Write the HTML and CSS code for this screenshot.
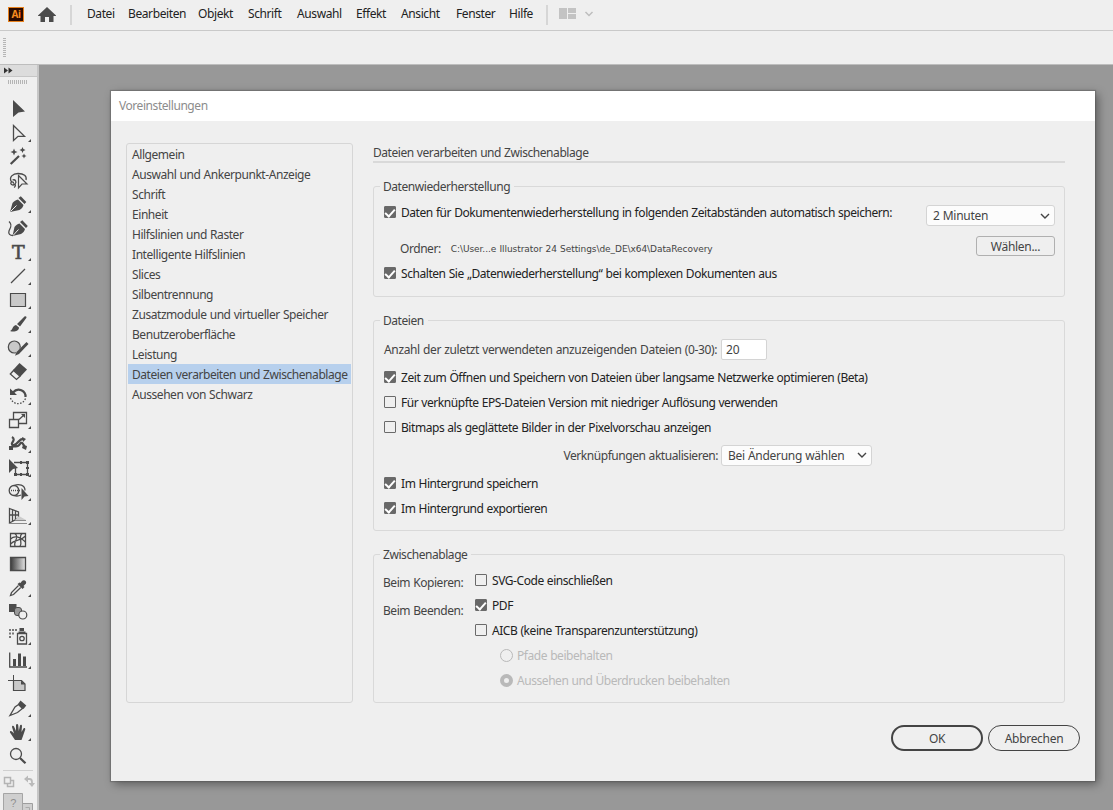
FILE: index.html
```html
<!DOCTYPE html>
<html lang="de">
<head>
  <meta charset="UTF-8">
  <title>Voreinstellungen</title>
  <meta name="viewport" content="width=device-width, initial-scale=1.0">
  <link rel="stylesheet" href="styles.css">
</head>
<body>
  <header class="menubar">
    <div class="app-logo">Ai</div>
    <svg class="home" width="20" height="18" viewBox="0 0 20 18"><path d="M10 1L1 9.5V10H3.5V16H8V11H12V16H16.500V10H19V9.500z" fill="#4b4b4b"/></svg>
    <span class="sep"></span>
    <nav class="menu">
      <span class="m1">Datei</span>
      <span class="m2">Bearbeiten</span>
      <span class="m3">Objekt</span>
      <span class="m4">Schrift</span>
      <span class="m5">Auswahl</span>
      <span class="m6">Effekt</span>
      <span class="m7">Ansicht</span>
      <span class="m8">Fenster</span>
      <span class="m9">Hilfe</span>
    </nav>
    <span class="sep"></span>
    <svg class="workspace" width="36" height="12" viewBox="0 0 36 12">
      <path d="M0 0H8V11H0zM9 0H17V5H9zM9 6H17V11H9z" fill="#c3c3c3"/>
      <path d="M26.500 4L30 7.500L33.500 4" fill="none" stroke="#bdbdbd" stroke-width="1.500"/>
    </svg>
  </header>
  <div class="control-bar"><span class="grip"></span></div>

  <div class="workarea">
    <aside class="toolbar">
      <div class="toolbar-head">
        <svg width="10" height="7" viewBox="0 0 10 7"><path d="M0 .5L4 3.500L0 6.500zM4.500 .5L8.500 3.500L4.500 6.500z" fill="#333"/></svg>
      </div>
      <div class="toolbar-grip"></div>

      <div class="tools">
        <svg class="tool" viewBox="0 0 38 24"><path class="f" d="M13 4L25 15.500L18.500 16.500L13 21z"/></svg>
        <svg class="tool" viewBox="0 0 38 24"><path class="s" d="M13.500 5.500L24.500 16.300H18L13.500 20.500z"/><path class="f" d="M31 19V22H28z"/></svg>
        <svg class="tool" viewBox="0 0 38 24"><path class="s2" d="M10.700 20L19 12"/><path class="f" d="M14 4.500L15 7L17.500 8L15 9L14 11.500L13 9L10.500 8L13 7zM22.500 3L23.400 5.100L25.500 6L23.400 6.900L22.500 9L21.600 6.900L19.500 6L21.600 5.100zM24 9.500L24.800 11.200L26.500 12L24.800 12.800L24 14.500L23.200 12.800L21.500 12L23.200 11.200z"/></svg>
        <svg class="tool" viewBox="0 0 38 24"><path class="s" d="M11.500 14C8.500 9 13 5.500 18 5.500C24 5.500 27 8 26 12M12.500 12C15.500 11 17 14 15 16C13 18 10 16.500 11 14.500C12 13 14.500 14.500 13 15.500M15 16C16 17.500 15 19 14 19.500"/><path class="o" d="M18.500 7.500L27 16H22L18.500 20z"/></svg>
        <svg class="tool" viewBox="0 0 38 24"><path class="f" d="M10 20L12.500 11C14 9 16 8 18 7.500L23.500 13C23 15 21.500 17 19.500 18zM18.500 6L20.800 4.300L26.300 10L24.500 12z"/><path class="w" d="M10.500 19.500L16.500 13.500"/><path class="f" d="M31 18V21H28z"/></svg>
        <svg class="tool" viewBox="0 0 38 24"><path class="f" d="M12.500 20L14.500 11C16 9 17.500 8 19.500 7.500L25 13C24.500 15 23 17 21 18zM20 6L22.300 4.300L27.800 10L26 12z"/><path class="w" d="M13 19.500L18.500 13.500"/><path class="s" d="M9 5.500C13 9 10 12 9 15C8 18 10 19.500 13 19.500"/></svg>
        <svg class="tool" viewBox="0 0 38 24"><text x="18" y="18.500" class="type">T</text><path class="f" d="M31 18V21H28z"/></svg>
        <svg class="tool" viewBox="0 0 38 24"><path class="s" d="M11 19L25 5"/><path class="f" d="M31 18V21H28z"/></svg>
        <svg class="tool" viewBox="0 0 38 24"><path class="g" d="M10.500 5.500H25.500V18.500H10.500z"/><path class="f" d="M31 18V21H28z"/></svg>
        <svg class="tool" viewBox="0 0 38 24"><path class="f" d="M24.500 4.500C26 3.800 27 5 26.300 6L20 14.500L17 12zM16 13L19 15.500C19 19 14 20.500 10 19C13 18 12 14 16 13z"/><path class="f" d="M31 18V21H28z"/></svg>
        <svg class="tool" viewBox="0 0 38 24"><circle class="g" cx="14.300" cy="11" r="6"/><path class="halo" d="M28 7.500L17 18"/><path class="f" d="M26.500 6L28.500 8L19 18L15 19.800L16.500 16z"/><path class="f" d="M31 18V21H28z"/></svg>
        <svg class="tool" viewBox="0 0 38 24"><path class="f" d="M19.500 3L27 9.500L20.500 16.500L13 10z"/><path class="s" d="M13.500 10.500L20 16.300L16.500 19.500L10.300 14z"/><path class="f" d="M31 18V21H28z"/></svg>
        <svg class="tool" viewBox="0 0 38 24"><path class="s2" d="M13 8.500C18 2.500 26 7 25.500 13"/><path class="f" d="M10 4.500V11H17z"/><path class="s" stroke-dasharray="1.500 1.500" d="M25.500 14.500C23 21.500 13 21.500 10.500 14"/><path class="f" d="M31 18V21H28z"/></svg>
        <svg class="tool" viewBox="0 0 38 24"><path class="s" d="M13.500 11V4.500H26.500V15.500H19M9.500 11.500H18.500V19.500H9.500z"/><path class="s" d="M19 11.500L24 7"/><path class="f" d="M21 6H25V10z"/><path class="f" d="M31 18V21H28z"/></svg>
        <svg class="tool" viewBox="0 0 38 24"><path class="s2" d="M12 5C17 8 9 12 13 13C18 14 19 5 24 7M9.500 16C14 12 17 17 20 12C22 9 23 12 25.500 16"/><path class="f" d="M9 14H13V18H9zM22 5L26 7L23 10zM23 13L27 14L26 18L22 16z"/><path class="f" d="M31 18V21H28z"/></svg>
        <svg class="tool" viewBox="0 0 38 24"><path class="s" d="M14 6.500H27.500V18.500H15.500V12"/><path class="f" d="M9 3L18 12L13 13L9 17zM26 5H29V8H26zM26 17H29V20H26zM14 17H17V20H14zM20 5H22V8H20zM20 17H22V20H20zM26 11H29V13H26z"/><path class="f" d="M31 18V21H28z"/></svg>
        <svg class="tool" viewBox="0 0 38 24"><ellipse class="s" cx="14" cy="10.500" rx="4.800" ry="5"/><path class="s" d="M14 5.500C19 3.500 25 5 25 10.500M14 15.500C17 16.500 20 15.500 21 15"/><path class="s" stroke-dasharray="1 1" d="M11 10.500H21"/><path class="f" d="M21.500 8L28.500 16L24.500 16.500L21.500 20z"/><path class="f" d="M31 18V21H28z"/></svg>
        <svg class="tool" viewBox="0 0 38 24"><path class="s" d="M9.500 4.500L18.500 8V14L9.500 19zM12.500 6V17.500M15.500 7V16M9.500 11H18.500"/><path d="M19 12L26 16H15z" fill="#ccc"/><path class="lite" d="M15 16.500H26M10 19.500H27"/><path class="f" d="M31 18V21H28z"/></svg>
        <svg class="tool" viewBox="0 0 38 24"><path class="s" d="M10.500 5.500H25.500V18.500H10.500z"/><path class="s" d="M10.500 11C15 7 20 9 25.500 14M15 5.500C20 10 13 13 15 18.500M22 5.500C18 9 23 14 20 18.500M10.500 16C15 11 20 14 25.500 8"/></svg>
        <svg class="tool" viewBox="0 0 38 24"><defs><linearGradient id="grad"><stop offset="0" stop-color="#3a3a3a"/><stop offset="1" stop-color="#e6e6e6"/></linearGradient></defs><path class="s fade" d="M10.500 5.500H25.500V18.500H10.500z"/></svg>
        <svg class="tool" viewBox="0 0 38 24"><path class="f" d="M22 5C24 3 27 5 26 7.500L23.500 10L24.500 11L22.500 13L17.500 8L19.500 6.500L20.500 7z"/><path class="s" d="M18.500 9.500L11.500 16.500L10.500 19.500L13.500 18.500L20.700 11.500"/><path class="f" d="M31 18V21H28z"/></svg>
        <svg class="tool" viewBox="0 0 38 24"><path class="f" d="M9 4H16.500V12H9z"/><rect x="14.500" y="7.500" width="7" height="8" rx="2.500" fill="#999" stroke="#4b4b4b"/><circle class="o" cx="22.800" cy="15" r="4"/></svg>
        <svg class="tool" viewBox="0 0 38 24"><path class="s" d="M17.500 9.500H26.500V20H17.500z"/><path class="f" d="M19.500 4H24V7H19.500zM18.500 7.500H25.500V9H18.500z"/><circle class="s" cx="22" cy="14.500" r="2.200"/><path d="M9 5H11V7H9zM12 5H14V7H12zM15 5H17V7H15zM9 8.500H11V10.500H9zM12 8.500H14V10.500H12zM9 12H11V14H9z" fill="#777"/><path class="f" d="M31 18V21H28z"/></svg>
        <svg class="tool" viewBox="0 0 38 24"><path class="s" d="M9.700 4.500V19H27"/><path class="f" d="M13 11H16V18H13zM18 5.500H21V18H18zM23 8.500H26V18H23z"/><path class="f" d="M31 18V21H28z"/></svg>
        <svg class="tool" viewBox="0 0 38 24"><path class="thin" d="M13.500 3V8M8 8.500H14"/><path class="g" d="M13.500 8.500H21.500L25 12V18.500H13.500z"/><path class="f" d="M21 8.500L25 12.500H21z"/></svg>
        <svg class="tool" viewBox="0 0 38 24"><path class="s" d="M18.500 8.500L22.500 12.500L17.500 16.500L10 19.500L15 11z"/><path class="f" d="M20.500 4.500L26.300 9.500L23.500 13L18 8z"/><path class="f" d="M31 18V21H28z"/></svg>
        <svg class="tool" viewBox="0 0 38 24"><path class="f" d="M15 20L10 12.500C9.500 11 11 10.500 12 11.500L14 13.500L12 7C12 5.500 13.500 5.300 14 6.500L16 11L16 5C16.200 3.500 18 3.500 18.200 5L18.800 11L20 5.500C20.500 4.300 22 4.700 22 6L21.500 12L23.500 8.500C24.300 7.500 25.600 8.200 25.200 9.500L23 16L21.500 20z"/><path class="f" d="M31 18V21H28z"/></svg>
        <svg class="tool" viewBox="0 0 38 24"><circle class="s" cx="16" cy="10" r="5.500"/><path class="s2" d="M20 14L25.500 19.300"/></svg>
      </div>

      <div class="swatches">
        <svg width="38" height="40" viewBox="0 0 38 40">
          <path d="M3 .5H33" stroke="#d0d0d0"/>
          <path d="M4.500 7.500H10.500V13.500H4.500zM10.500 10.500H13.500V16.500H7.500V13.500" fill="none" stroke="#b4b4b4" stroke-width="1.500"/>
          <path d="M27 9H29.500Q32 9 32 12V14" fill="none" stroke="#bababa" stroke-width="1.800"/><path d="M24 9L28 5.500V12.500zM28.500 13H35L32 17z" fill="#bababa"/>
          <path d="M20.500 33.500H32.500V45H20.500z" fill="#cfcfcf" stroke="#9e9e9e"/><path d="M25.500 37.500H29.500V41" fill="none" stroke="#aaa"/>
          <path d="M3.500 23.500H22.500V45H3.500z" fill="#cfcfcf" stroke="#a5a5a5"/>
          <text x="13" y="37" class="question">?</text>
        </svg>
      </div>
    </aside>

    <main class="canvas">
      <section class="dialog">
        <div class="titlebar">Voreinstellungen</div>
        <div class="dialog-body">
          <ul class="categories">
            <li>Allgemein</li>
            <li>Auswahl und Ankerpunkt-Anzeige</li>
            <li>Schrift</li>
            <li>Einheit</li>
            <li>Hilfslinien und Raster</li>
            <li>Intelligente Hilfslinien</li>
            <li>Slices</li>
            <li>Silbentrennung</li>
            <li>Zusatzmodule und virtueller Speicher</li>
            <li>Benutzeroberfläche</li>
            <li>Leistung</li>
            <li class="selected">Dateien verarbeiten und Zwischenablage</li>
            <li>Aussehen von Schwarz</li>
          </ul>

          <div class="settings">
            <h1>Dateien verarbeiten und Zwischenablage</h1>

            <fieldset class="recovery">
              <legend>Datenwiederherstellung</legend>
              <div class="recovery-left">
                <label class="check"><i class="box on"></i>Daten für Dokumentenwiederherstellung in folgenden Zeitabständen automatisch speichern:</label>
                <div class="folder"><span>Ordner:</span><span class="path">C:\User...e Illustrator 24 Settings\de_DE\x64\DataRecovery</span></div>
                <label class="check"><i class="box on"></i>Schalten Sie „Datenwiederherstellung“ bei komplexen Dokumenten aus</label>
              </div>
              <div class="recovery-right">
                <div class="select interval">2 Minuten<svg width="10" height="6" viewBox="0 0 10 6"><path d="M1 1L5 5L9 1"/></svg></div>
                <button class="choose">Wählen...</button>
              </div>
            </fieldset>

            <fieldset class="files">
              <legend>Dateien</legend>
              <div class="field recent"><span>Anzahl der zuletzt verwendeten anzuzeigenden Dateien (0-30):</span><div class="number">20</div></div>
              <label class="check"><i class="box on"></i>Zeit zum Öffnen und Speichern von Dateien über langsame Netzwerke optimieren (Beta)</label>
              <label class="check"><i class="box"></i>Für verknüpfte EPS-Dateien Version mit niedriger Auflösung verwenden</label>
              <label class="check"><i class="box"></i>Bitmaps als geglättete Bilder in der Pixelvorschau anzeigen</label>
              <div class="field links"><span>Verknüpfungen aktualisieren:</span><div class="select update">Bei Änderung wählen<svg width="10" height="6" viewBox="0 0 10 6"><path d="M1 1L5 5L9 1"/></svg></div></div>
              <label class="check"><i class="box on"></i>Im Hintergrund speichern</label>
              <label class="check"><i class="box on"></i>Im Hintergrund exportieren</label>
            </fieldset>

            <fieldset class="clipboard">
              <legend>Zwischenablage</legend>
              <div class="clip-labels"><span>Beim Kopieren:</span><span>Beim Beenden:</span></div>
              <div class="clip-options">
                <label class="check"><i class="box"></i>SVG-Code einschließen</label>
                <label class="check"><i class="box on"></i>PDF</label>
                <label class="check"><i class="box"></i>AICB (keine Transparenzunterstützung)</label>
                <label class="check radio"><i class="dot"></i>Pfade beibehalten</label>
                <label class="check radio"><i class="dot on"></i>Aussehen und Überdrucken beibehalten</label>
              </div>
            </fieldset>
          </div>
        </div>
        <div class="actions">
          <button class="pill primary">OK</button>
          <button class="pill">Abbrechen</button>
        </div>
      </section>
    </main>
  </div>
</body>
</html>
```
FILE: styles.css
```css
* {
  box-sizing: border-box;
}

body {
  margin: 0;
  height: 810px;
  overflow: hidden;
  display: flex;
  flex-direction: column;
  background: #efefef;
  color: #444;
  font-family: "Noto Sans", "Open Sans", sans-serif;
  font-size: 12px;
  letter-spacing: -0.44px;
  word-spacing: 0.4px;
  user-select: none;
}

/* menu */
.menubar {
  height: 31px;
  flex: none;
  display: flex;
  align-items: center;
  padding: 0 0 2px 8px;
  border-bottom: 1px solid #c9c9c9;
}

.app-logo {
  width: 16px;
  height: 15px;
  border: 1px solid #e8821e;
  background: #2b0a00;
  color: #f78b1f;
  font-size: 10px;
  font-weight: bold;
  line-height: 13px;
  text-align: center;
}

.home {
  margin: 2px 13px 0 13px;
}

.sep {
  width: 2px;
  height: 20px;
  margin-top: 2px;
  background: #d6d6d6;
}

.menu {
  display: flex;
  width: 474px;
  padding: 0 0 2px 15px;
  color: #222;
  letter-spacing: -0.4px;
}

.m1 { width: 41px; }
.m2 { width: 70px; }
.m3 { width: 50px; }
.m4 { width: 49px; }
.m5 { width: 59px; }
.m6 { width: 45px; }
.m7 { width: 55px; }
.m8 { width: 53px; }

.workspace {
  margin-left: 11px;
}

.control-bar {
  height: 34px;
  flex: none;
  padding: 7px 3px;
  border-bottom: 1px solid #bdbdbd;
}

.grip {
  display: block;
  width: 3px;
  height: 19px;
  background: repeating-linear-gradient(#b5b5b5 0 1px, transparent 1px 2px);
}

/* left tools */
.workarea {
  flex: 1;
  display: flex;
  min-height: 0;
}

.toolbar {
  width: 39px;
  flex: none;
  border-right: 2px solid #c6c6c6;
}

.toolbar-head {
  height: 12px;
  display: flex;
  align-items: center;
  padding-left: 4px;
  background: #dcdcdc;
  border-bottom: 1px solid #c6c6c6;
}

.toolbar-grip {
  width: 20px;
  height: 4px;
  margin: 3px 0 12px 8px;
  background: repeating-linear-gradient(90deg, #b5b5b5 0 1px, transparent 1px 2px);
}

.tools {
  display: flex;
  flex-direction: column;
}

.tool {
  width: 38px;
  height: 24px;
  display: block;
}

.f { fill: #4b4b4b; }
.s { fill: none; stroke: #4b4b4b; stroke-width: 1.3; }
.s2 { fill: none; stroke: #4b4b4b; stroke-width: 2.2; }
.o { fill: #efefef; stroke: #4b4b4b; stroke-width: 1.2; }
.g { fill: #c9c9c9; stroke: #4b4b4b; stroke-width: 1.2; }
.w { fill: none; stroke: #efefef; stroke-width: 1; }
.halo { stroke: #efefef; stroke-width: 4; }
.thin { fill: none; stroke: #4b4b4b; stroke-width: 1; }
.lite { fill: none; stroke: #8a8a8a; stroke-width: 1; }
.fade { fill: url(#grad); }

.type {
  font: 19px "DejaVu Serif", serif;
  fill: #4b4b4b;
  stroke: #4b4b4b;
  stroke-width: 0.6;
  text-anchor: middle;
}

.swatches {
  margin-top: 2px;
}

.swatches svg {
  display: block;
}

.question {
  font: 11px "Liberation Sans", sans-serif;
  fill: #8f8f8f;
  text-anchor: middle;
}

.canvas {
  flex: 1;
  padding: 26px 18px 0 72px;
  background: #989898;
}

/* dialog */
.dialog {
  width: 984px;
  height: 690px;
  background: #efefef;
  box-shadow: 0 0 1px 1px rgba(80, 80, 80, 0.4), 3px 3px 9px rgba(0, 0, 0, 0.4);
}

.titlebar {
  height: 30px;
  padding-left: 8px;
  background: #fff;
  color: #8c8c8c;
  line-height: 30px;
}

.dialog-body {
  height: 604px;
  display: flex;
  gap: 20px;
  padding: 22px 30px 0 15px;
}

.categories {
  width: 227px;
  height: 560px;
  margin: 0;
  padding: 0 1px;
  list-style: none;
  border: 1px solid #d6d6d6;
  border-radius: 3px;
}

.categories li {
  height: 20px;
  padding-left: 4px;
  line-height: 21px;
  white-space: nowrap;
}

.categories .selected {
  background: #b7d0ed;
}

.settings {
  width: 692px;
}

h1 {
  height: 20px;
  margin: 0 0 13px;
  font-size: 12px;
  font-weight: normal;
  line-height: 19px;
  border-bottom: 2px solid #d9d9d9;
}

fieldset {
  min-width: 0;
  margin: 0 0 13px;
  padding: 0;
  border: 1px solid #d9d9d9;
  border-radius: 3px;
}

legend {
  height: 21px;
  margin-left: -4px;
  padding: 0 4px 0 3px;
  line-height: 21px;
}

.recovery {
  height: 121px;
  display: flex;
  justify-content: space-between;
  padding: 8px 9px 0 10px;
}

.files {
  height: 221px;
  padding: 7px 10px 0;
}

.clipboard {
  height: 159px;
  display: flex;
  padding: 3px 9px 0;
}

.clipboard legend {
  margin-left: -3px;
}

.check {
  height: 25px;
  display: flex;
  align-items: center;
  color: #222;
  white-space: nowrap;
}

.box {
  width: 12px;
  height: 12px;
  margin: 0 5px 1px 0;
  border: 1px solid #6a6a6a;
  border-radius: 1px;
}

.box.on {
  display: flex;
  justify-content: center;
  background: #686868;
}

.box.on::after {
  content: "";
  width: 4px;
  height: 8px;
  border: solid #fff;
  border-width: 0 2px 2px 0;
  transform: rotate(42deg);
}

.recovery-left .check {
  height: 15px;
}

.folder {
  display: flex;
  align-items: center;
  gap: 10px;
  height: 20px;
  margin: 18px 0 8px 16px;
}

.path {
  padding-top: 2px;
  font-family: "DejaVu Sans", sans-serif;
  font-size: 9px;
  letter-spacing: -0.06px;
}

.recovery-right {
  display: flex;
  flex-direction: column;
  align-items: flex-end;
  gap: 10px;
}

.select {
  height: 21px;
  display: flex;
  align-items: center;
  justify-content: space-between;
  padding: 0 4px 0 6px;
  background: #fcfcfc;
  border: 1px solid #d4d4d4;
  border-radius: 3px;
}

.select path {
  fill: none;
  stroke: #444;
  stroke-width: 1.4;
}

.interval { width: 129px; }
.update { width: 151px; }

.select,
button {
  letter-spacing: -0.3px;
}

button {
  padding: 0;
  color: #444;
  background: #efefef;
  font: inherit;
}

.choose {
  width: 79px;
  height: 20px;
  border: 1px solid #b0b0b0;
  border-radius: 3px;
}

.field {
  height: 22px;
  display: flex;
  align-items: center;
}

.field span {
  width: 334px;
  margin-right: 3px;
  white-space: nowrap;
}

.recent {
  margin-bottom: 5px;
  letter-spacing: -0.35px;
}

.links {
  margin: 4px 0 5px;
}

.links span {
  text-align: right;
}

.number {
  width: 46px;
  height: 21px;
  padding-left: 4px;
  line-height: 19px;
  background: #fff;
  border: 1px solid #d4d4d4;
  border-radius: 2px;
  letter-spacing: 0;
}

.clip-labels {
  width: 92px;
  display: flex;
  flex-direction: column;
  padding-top: 4px;
}

.clip-labels span {
  height: 28px;
  line-height: 22px;
}

.radio {
  padding-left: 25px;
  color: #b9b9b9;
}

.dot {
  width: 13px;
  height: 13px;
  margin-right: 4px;
  border: 1px solid #b9b9b9;
  border-radius: 50%;
}

.dot.on {
  border-width: 4px;
}

.actions {
  display: flex;
  justify-content: flex-end;
  gap: 5px;
  padding-right: 15px;
}

.pill {
  width: 92px;
  height: 26px;
  border: 1px solid #444;
  border-radius: 13px;
}

.primary {
  border-width: 2px;
}
```
